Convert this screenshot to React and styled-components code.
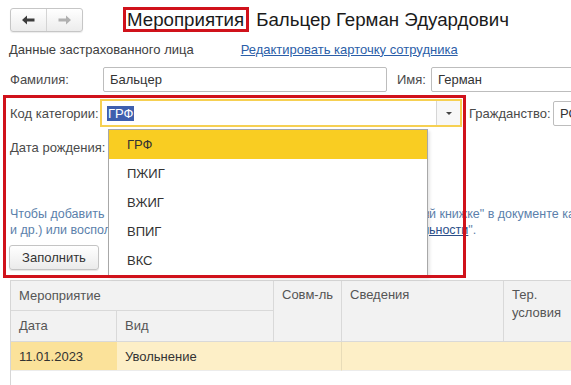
import React from "react";
import styled, { createGlobalStyle } from "styled-components";

const Global = createGlobalStyle`
  html, body { margin: 0; padding: 0; background: #fff; }
  #root { width: 571px; height: 385px; overflow: hidden; position: relative; }
  * { box-sizing: border-box; }
`;

const Page = styled.div`
  position: relative;
  width: 571px;
  height: 385px;
  overflow: hidden;
  font-family: "Liberation Sans", Arial, sans-serif;
  font-size: 13px;
  color: #404040;
  padding: 7px 0 0 9px;
`;

const HeaderRow = styled.div`
  display: flex;
  align-items: center;
  height: 25px;
`;

const NavGroup = styled.div`
  display: flex;
  width: 73px;
  height: 24px;
  margin-left: 1px;
  border: 1px solid #c6c6c6;
  border-radius: 3px;
  background: linear-gradient(#ffffff, #ececec);
  box-shadow: 0 1px 1px rgba(0,0,0,0.08);
`;

const NavButton = styled.div`
  flex: 1;
  display: flex;
  align-items: center;
  justify-content: center;
  border-left: ${(p) => (p.$divider ? "1px solid #d4d4d4" : "none")};
`;

const Title = styled.div`
  margin-left: 40px;
  display: flex;
  align-items: center;
  font-size: 18.7px;
  color: #1a1a1a;
  white-space: nowrap;
`;

const TitleMark = styled.span`
  display: inline-block;
  border: 3px solid #d0121b;
  padding: 0 2px 0 1px;
  line-height: 19px;
  margin-right: 7px;
`;

const SubRow = styled.div`
  display: flex;
  align-items: center;
  height: 16px;
  margin-top: 9px;
  white-space: nowrap;
`;

const Link = styled.span`
  color: #2b5ea8;
  text-decoration: underline;
  margin-left: ${(p) => p.$ml || 0}px;
`;

const FieldRow = styled.div`
  display: flex;
  align-items: center;
  height: ${(p) => p.$h || 24}px;
  margin-top: ${(p) => p.$mt || 0}px;
  white-space: nowrap;
`;

const Label = styled.div`
  width: ${(p) => p.$w}px;
  padding-left: ${(p) => p.$pl || 1}px;
  color: #4a4a4a;
  flex-shrink: 0;
`;

const Input = styled.div`
  width: ${(p) => p.$w}px;
  height: ${(p) => p.$h || 24}px;
  border: 1px solid #bdbdbd;
  border-radius: 2px;
  padding-left: 6px;
  display: flex;
  align-items: center;
  color: #333;
  flex-shrink: 0;
  background: #fff;
`;

const Combo = styled.div`
  width: 362px;
  height: 28px;
  border: 2px solid #f6d052;
  display: flex;
  align-items: center;
  padding-left: 5px;
  flex-shrink: 0;
  background: #fff;
`;

const Selected = styled.span`
  background: #3e5fae;
  color: #fff;
  padding: 0 1px;
  line-height: 15px;
`;

const ComboButton = styled.div`
  margin-left: auto;
  width: 24px;
  height: 100%;
  border-left: 1px solid #d6d6d6;
  background: #f7f7f7;
  display: flex;
  align-items: center;
  justify-content: center;
`;

const Triangle = styled.div`
  width: 0;
  height: 0;
  border-left: 3px solid transparent;
  border-right: 3px solid transparent;
  border-top: 3px solid #444;
`;

const Info = styled.div`
  margin-top: 47px;
  margin-left: 1px;
  color: #5b7fab;
  font-size: 12.5px;
  line-height: 16px;
  white-space: nowrap;
`;

const InfoLine = styled.div`
  display: flex;
  height: 16px;
`;

const Clip = styled.span`
  display: inline-block;
  width: ${(p) => p.$w}px;
  overflow: hidden;
  white-space: nowrap;
  flex-shrink: 0;
`;

const InfoLink = styled.span`
  color: #2b4f8a;
  text-decoration: underline;
`;

const FillButton = styled.div`
  margin-top: 7px;
  width: 90px;
  height: 25px;
  border: 1px solid #c4c4c4;
  border-radius: 3px;
  background: linear-gradient(#ffffff, #ebebeb);
  box-shadow: 0 1px 1px rgba(0,0,0,0.1);
  display: flex;
  align-items: center;
  justify-content: center;
  color: #333;
`;

const Table = styled.div`
  margin-top: 10px;
  margin-left: 1px;
  width: 640px;
  display: grid;
  grid-template-columns: 106px 157px 68px 162px 147px;
  grid-template-rows: 30px 31px 29px 20px;
  border-left: 1px solid #d6d6d6;
  border-top: 1px solid #d6d6d6;
`;

const HeadCell = styled.div`
  background: #f2f2f2;
  color: #555;
  padding: ${(p) => (p.$top ? "5px 8px 0" : "0 8px")};
  display: flex;
  align-items: ${(p) => (p.$top ? "flex-start" : "center")};
  line-height: 18px;
  border-right: 1px solid #d9d9d9;
  border-bottom: 1px solid #d9d9d9;
  grid-column: ${(p) => p.$col || "auto"};
  grid-row: ${(p) => p.$row || "auto"};
  white-space: ${(p) => (p.$wrap ? "normal" : "nowrap")};
`;

const DataCell = styled.div`
  background: ${(p) => (p.$active ? "#fbe29a" : "#fdefc7")};
  color: #333;
  padding: 0 8px;
  display: flex;
  align-items: center;
  border-right: ${(p) => (p.$sep ? "1px solid #e8dcb8" : "none")};
  border-bottom: 1px solid #ececec;
`;

const Overlay = styled.div`
  position: absolute;
  left: 3px;
  top: 95px;
  width: 463px;
  height: 183px;
  border: 3px solid #d0121b;
  pointer-events: none;
  z-index: 3;
`;

const Dropdown = styled.div`
  position: absolute;
  left: 108px;
  top: 129px;
  width: 320px;
  height: 148px;
  background: #fff;
  border: 1px solid #a8a8a8;
  box-shadow: 2px 2px 3px rgba(0,0,0,0.1);
  z-index: 2;
`;

const Item = styled.div`
  height: 29px;
  display: flex;
  align-items: center;
  padding-left: 18px;
  color: #333;
  background: ${(p) => (p.$active ? "#f9cd22" : "transparent")};
`;

const ArrowLeft = () => (
  <svg width="13" height="10" viewBox="0 0 13 10">
    <path d="M0 5 L5 0.5 L5 3.5 L12.5 3.5 L12.5 6.5 L5 6.5 L5 9.5 Z" fill="#3c3c3c" />
  </svg>
);

const ArrowRight = () => (
  <svg width="13" height="10" viewBox="0 0 13 10">
    <path d="M13 5 L8 0.5 L8 3.5 L0.5 3.5 L0.5 6.5 L8 6.5 L8 9.5 Z" fill="#b0b0b0" />
  </svg>
);

const items = ["ГРФ", "ПЖИГ", "ВЖИГ", "ВПИГ", "ВКС"];

export default function App() {
  return (
    <>
      <Global />
      <Page>
        <HeaderRow>
          <NavGroup>
            <NavButton><ArrowLeft /></NavButton>
            <NavButton $divider><ArrowRight /></NavButton>
          </NavGroup>
          <Title>
            <TitleMark>Мероприятия</TitleMark>
            Бальцер Герман Эдуардович
          </Title>
        </HeaderRow>

        <SubRow>
          Данные застрахованного лица
          <Link $ml={47}>Редактировать карточку сотрудника</Link>
        </SubRow>

        <FieldRow $mt={10} $h={25}>
          <Label $w={94}>Фамилия:</Label>
          <Input $w={284} $h={25}>Бальцер</Input>
          <Label $w={44} $pl={10}>Имя:</Label>
          <Input $w={160} $h={25}>Герман</Input>
        </FieldRow>

        <FieldRow $mt={7} $h={28}>
          <Label $w={91}>Код категории:</Label>
          <Combo>
            <Selected>ГРФ</Selected>
            <ComboButton><Triangle /></ComboButton>
          </Combo>
          <Label $w={91} $pl={7}>Гражданство:</Label>
          <Input $w={60} $h={25}>РО</Input>
        </FieldRow>

        <FieldRow $mt={8} $h={24}>
          <Label $w={100}>Дата рождения:</Label>
        </FieldRow>

        <Info>
          <InfoLine>
            <Clip $w={419}>Чтобы добавить мероприятие, используйте команду "Отразить в трудовой книжке</Clip>
            <span>й книжке" в документе кадрового учета</span>
          </InfoLine>
          <InfoLine>
            <Clip $w={419}>и др.) или воспользуйтесь документом "Регистрация трудовой деятельности</Clip>
            <span><InfoLink>ьности</InfoLink>".</span>
          </InfoLine>
        </Info>

        <FillButton>Заполнить</FillButton>

        <Table>
          <HeadCell $col="1 / 3" $row="1">Мероприятие</HeadCell>
          <HeadCell $col="3" $row="1 / 3" $top>Совм-ль</HeadCell>
          <HeadCell $col="4" $row="1 / 3" $top>Сведения</HeadCell>
          <HeadCell $col="5" $row="1 / 3" $top $wrap>Тер.<br />условия</HeadCell>
          <HeadCell $col="1" $row="2">Дата</HeadCell>
          <HeadCell $col="2" $row="2">Вид</HeadCell>
          <DataCell $active>11.01.2023</DataCell>
          <DataCell>Увольнение</DataCell>
          <DataCell $sep />
          <DataCell />
          <DataCell />
        </Table>

        <Dropdown>
          {items.map((it, i) => (
            <Item key={it} $active={i === 0}>{it}</Item>
          ))}
        </Dropdown>
        <Overlay />
      </Page>
    </>
  );
}
